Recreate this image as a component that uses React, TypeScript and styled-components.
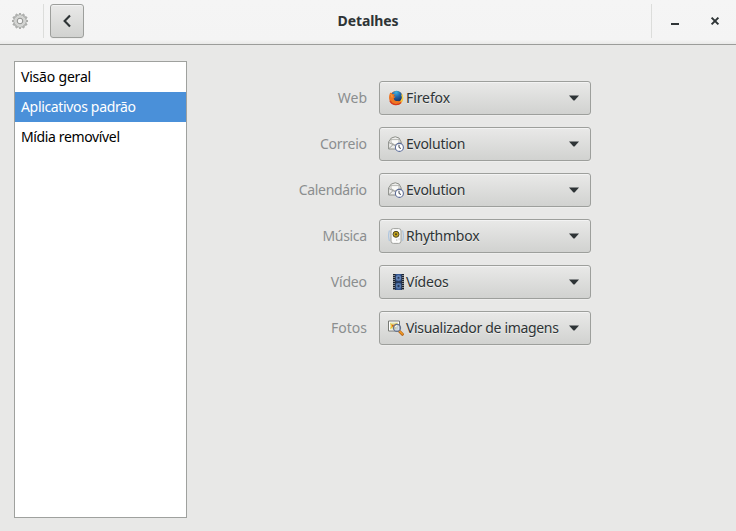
import React from "react";
import styled, { createGlobalStyle } from "styled-components";

const GlobalStyle = createGlobalStyle`
  * { box-sizing: border-box; }
  html, body { margin: 0; }
  body { background: #e8e8e7; overflow: hidden; }
  button { font: inherit; color: inherit; margin: 0; padding: 0; }
  svg { display: block; flex: none; }
`;

const Window = styled.div`
  width: 736px;
  height: 531px;
  display: flex;
  flex-direction: column;
  background: #e8e8e7;
  color: #2e3436;
  font: 14px/20px "Noto Sans", "Open Sans", sans-serif;
`;

const HeaderBar = styled.header`
  height: 45px;
  flex: none;
  display: grid;
  grid-template-columns: 50px 34px 1fr 85px;
  padding: 4px 0 0;
  align-items: start;
  background: linear-gradient(#f5f5f5 0, #f4f4f4 40px, #e9e9e8 44px);
  border-bottom: 1px solid #9b9c9a;
`;

const AppMenu = styled.div`
  width: 44px;
  height: 34px;
  padding-left: 12px;
  display: flex;
  align-items: center;
  border-right: 1px solid #dcdddb;
`;

const raised = `
  border: 1px solid #9d9f9c;
  border-radius: 3px;
  background: linear-gradient(#e9e9e8, #d1d2d0);
  box-shadow: inset 0 1px #f3f3f3, 0 1px #eeeeed;
`;

const BackButton = styled.button`
  ${raised}
  height: 34px;
  display: flex;
  align-items: center;
  justify-content: center;
`;

const Title = styled.h1<{ $spacing: number }>`
  margin: 0;
  padding-left: 1px;
  font-size: 14px;
  line-height: 33px;
  font-weight: 700;
  text-align: center;
  letter-spacing: ${(p) => p.$spacing}px;
`;

const WindowControls = styled.div`
  height: 34px;
  display: flex;
  align-items: center;
  border-left: 1px solid #dcdddb;
`;

const ControlButton = styled.button<{ $width: number }>`
  width: ${(p) => p.$width}px;
  height: 34px;
  border: 0;
  background: transparent;
  display: flex;
  align-items: center;
  justify-content: center;
`;

const Content = styled.main`
  flex: 1;
  display: flex;
  padding: 16px 0 13px 14px;
`;

const Sidebar = styled.nav`
  width: 173px;
  flex: none;
  background: #fff;
  border: 1px solid #9fa19e;
`;

const SidebarRow = styled.div<{ $selected?: boolean; $spacing: number }>`
  height: 30px;
  padding-left: 6px;
  line-height: 29px;
  white-space: nowrap;
  letter-spacing: ${(p) => p.$spacing}px;
  color: ${(p) => (p.$selected ? "#fff" : "#000")};
  background: ${(p) => (p.$selected ? "#4a90d9" : "transparent")};
`;

const Form = styled.div`
  margin-left: 92px;
  padding-top: 20px;
  display: grid;
  grid-template-columns: 88px 212px;
  grid-auto-rows: 34px;
  gap: 12px;
  align-content: start;
`;

const Label = styled.label<{ $spacing: number }>`
  text-align: right;
  line-height: 33px;
  color: #8b8e8f;
  letter-spacing: ${(p) => p.$spacing}px;
  margin-right: ${(p) => -p.$spacing}px;
`;

const Combo = styled.button`
  ${raised}
  height: 34px;
  display: flex;
  align-items: center;
  padding: 0 11px 0 8px;
  text-align: left;
`;

const ComboText = styled.span<{ $spacing: number }>`
  flex: 1;
  margin-left: 2px;
  line-height: 31px;
  height: 32px;
  white-space: nowrap;
  text-shadow: 0 1px #eeeeec;
  letter-spacing: ${(p) => p.$spacing}px;
`;

const teeth = Array.from({ length: 12 }, (_, i) => i * 30);

const Gear = () => (
  <svg width="16" height="16" viewBox="0 0 16 16" fill="none" stroke="#8e908d">
    {teeth.map((angle) => (
      <path key={angle} d="M6.700 2.600 7.500.4h1l.8 2.200" strokeWidth=".8" fill="#c4c5c3" transform={`rotate(${angle} 8 8)`} />
    ))}
    <circle cx="8" cy="8" r="4.300" stroke="#d3d4d2" strokeWidth="2.600" />
    <circle cx="8" cy="8" r="2.800" strokeWidth="1" />
  </svg>
);

const BackIcon = () => (
  <svg width="16" height="16" viewBox="0 0 16 16">
    <path d="M11 2.400 5.600 8 11 13.600" fill="none" stroke="#2e3436" strokeWidth="2.100" />
  </svg>
);

const MinimizeIcon = () => (
  <svg width="16" height="16" viewBox="0 0 16 16">
    <path d="M4 10h8v2H4z" fill="#2e3436" />
  </svg>
);

const CloseIcon = () => (
  <svg width="16" height="16" viewBox="0 0 16 16">
    <path d="m4.600 4.600 6.800 6.800m0-6.800-6.800 6.800" stroke="#2e3436" strokeWidth="2" />
  </svg>
);

const Arrow = () => (
  <svg width="10" height="6" viewBox="0 0 10 6">
    <path d="M0 .5h10L6 5Q5 6 4 5Z" fill="#2e3436" />
  </svg>
);

const FirefoxIcon = () => (
  <svg width="16" height="16" viewBox="0 0 16 16">
    <defs>
      <linearGradient id="fox" x1="0" y1="0" x2="1" y2="0">
        <stop offset="0" stopColor="#dc5a1f" />
        <stop offset=".55" stopColor="#e9641a" />
        <stop offset="1" stopColor="#fbc63c" />
      </linearGradient>
      <radialGradient id="globe" cx=".45" cy=".15" r=".85">
        <stop offset="0" stopColor="#3fb4de" />
        <stop offset=".45" stopColor="#2368ad" />
        <stop offset="1" stopColor="#14305f" />
      </radialGradient>
    </defs>
    <circle cx="8.300" cy="8" r="7" fill="url(#fox)" />
    <circle cx="8.700" cy="6.400" r="5.600" fill="url(#globe)" />
    <path d="M2.200 2.400 4.200 4l2.600.3-1.200 1.900 2.200.5L5.700 8.200c.2 2.500 3 3.400 5.600 2.600L9 14.300 4 13.200Q1 10.800 1.100 7.500 1.200 4.500 2.200 2.400Z" fill="#ed7622" />
    <path d="M2.500 4.500 4 5.500v2" fill="none" stroke="#f7a944" strokeWidth="1" />
    <path d="M2 10.800c2 4.500 8 5 11 1.700" fill="none" stroke="#d63a1e" strokeWidth="1.400" />
    <path d="M13.700 4.500q1.700 3.500-.4 6.500" fill="none" stroke="#fbd347" strokeWidth="1.300" />
  </svg>
);

const EvolutionIcon = () => (
  <svg width="16" height="16" viewBox="0 0 16 16">
    <path d="M.6 6 3.300 2Q7.500-.5 11 2l2.200 4v7H.600Z" fill="#eeeeec" stroke="#8c8e89" />
    <path d="M3 6.500V3.600h8v2.900L7 9Z" fill="#fafaf9" stroke="#a8aaa5" strokeWidth=".8" />
    <path d="m.8 6.500 6 3 6-3M.8 12.800l4-4" fill="none" stroke="#91938f" strokeWidth=".9" />
    <circle cx="11.400" cy="11.400" r="4" fill="#fff" stroke="#5b6c99" strokeWidth="1.100" />
    <path d="M11 8.800v2.700l2 1" fill="none" stroke="#3e4452" strokeWidth="1" />
  </svg>
);

const RhythmboxIcon = () => (
  <svg width="16" height="16" viewBox="0 0 16 16">
    <path d="M1.500 2.500Q-.4 7.500 1.500 13M14.500 2.500q1.900 5 0 10.500" fill="none" stroke="#afc6df" strokeWidth="1.200" />
    <rect x="3" y=".6" width="10" height="14.800" rx="2.300" fill="#fcfcfb" stroke="#a0a29e" />
    <circle cx="8" cy="6.300" r="3" fill="#c4a31a" stroke="#4e4928" strokeWidth="1" />
    <circle cx="8" cy="6.300" r="1" fill="#45432c" />
    <path d="M8 12h1.300m1.200-1h1" stroke="#b2b4b0" />
  </svg>
);

const VideoIcon = () => (
  <svg width="16" height="16" viewBox="0 0 16 16">
    <path d="M5 0h11v16H5z" fill="#1c222c" />
    <path d="M7.500 0h6v7.500h-6zM7.500 8.500h6V16h-6z" fill="#34568f" />
    <circle cx="10.500" cy="3.900" r="2.300" fill="#5577ad" stroke="#7f9ccb" strokeWidth=".6" />
    <circle cx="10.500" cy="12" r="2.300" fill="#466b9f" stroke="#7593c0" strokeWidth=".6" />
    <path d="M9.700 3.900h1.600M9.700 12h1.600" stroke="#202a3e" strokeWidth="1.400" />
    <path d="M6 1v15M15 1v15" stroke="#eeeeec" strokeWidth="1" strokeDasharray="1 1" />
  </svg>
);

const PhotosIcon = () => (
  <svg width="16" height="16" viewBox="0 0 16 16">
    <path d="M.5 1h11v10H.5z" fill="#fff" stroke="#777974" />
    <path d="M2 2.500h8v7H2z" fill="#dfe3ab" />
    <path d="m2 3 3 2 4-2-1.400 3L8 9 5 7 2 9l1.500-3Z" fill="#f3b61f" />
    <path d="M4 4.800h1.600v1.600H4z" fill="#cf5a20" />
    <path d="m11.400 11.300 3 3" stroke="#b5651a" strokeWidth="3" strokeLinecap="round" />
    <path d="m11.600 11.200 2.800 2.800" stroke="#f39b24" strokeWidth="1.500" strokeLinecap="round" />
    <circle cx="9" cy="7.900" r="3.500" fill="#bdcce3" fillOpacity=".65" stroke="#65748d" strokeWidth="1.300" />
    <path d="M7.200 7.200q.4-1.500 2-1.500" fill="none" stroke="#fff" />
  </svg>
);

const sections = [
  { name: "Visão geral", spacing: -0.2 },
  { name: "Aplicativos padrão", spacing: -0.34, selected: true },
  { name: "Mídia removível", spacing: -0.36 },
];

const defaults = [
  { label: "Web", labelSpacing: 0, app: "Firefox", spacing: -0.1, Icon: FirefoxIcon },
  { label: "Correio", labelSpacing: -0.25, app: "Evolution", spacing: -0.25, Icon: EvolutionIcon },
  { label: "Calendário", labelSpacing: -0.33, app: "Evolution", spacing: -0.25, Icon: EvolutionIcon },
  { label: "Música", labelSpacing: -0.35, app: "Rhythmbox", spacing: -0.24, Icon: RhythmboxIcon },
  { label: "Vídeo", labelSpacing: -0.2, app: "Vídeos", spacing: -0.2, Icon: VideoIcon },
  { label: "Fotos", labelSpacing: 0, app: "Visualizador de imagens", spacing: -0.32, Icon: PhotosIcon },
];

export default function App() {
  return (
    <Window>
      <GlobalStyle />
      <HeaderBar>
        <AppMenu><Gear /></AppMenu>
        <BackButton aria-label="Voltar"><BackIcon /></BackButton>
        <Title $spacing={-0.1}>Detalhes</Title>
        <WindowControls>
          <ControlButton $width={46} aria-label="Minimizar"><MinimizeIcon /></ControlButton>
          <ControlButton $width={34} aria-label="Fechar"><CloseIcon /></ControlButton>
        </WindowControls>
      </HeaderBar>
      <Content>
        <Sidebar>
          {sections.map((s) => (
            <SidebarRow key={s.name} $selected={s.selected} $spacing={s.spacing}>{s.name}</SidebarRow>
          ))}
        </Sidebar>
        <Form>
          {defaults.map(({ label, labelSpacing, app, spacing, Icon }) => (
            <React.Fragment key={label}>
              <Label $spacing={labelSpacing}>{label}</Label>
              <Combo>
                <Icon />
                <ComboText $spacing={spacing}>{app}</ComboText>
                <Arrow />
              </Combo>
            </React.Fragment>
          ))}
        </Form>
      </Content>
    </Window>
  );
}
